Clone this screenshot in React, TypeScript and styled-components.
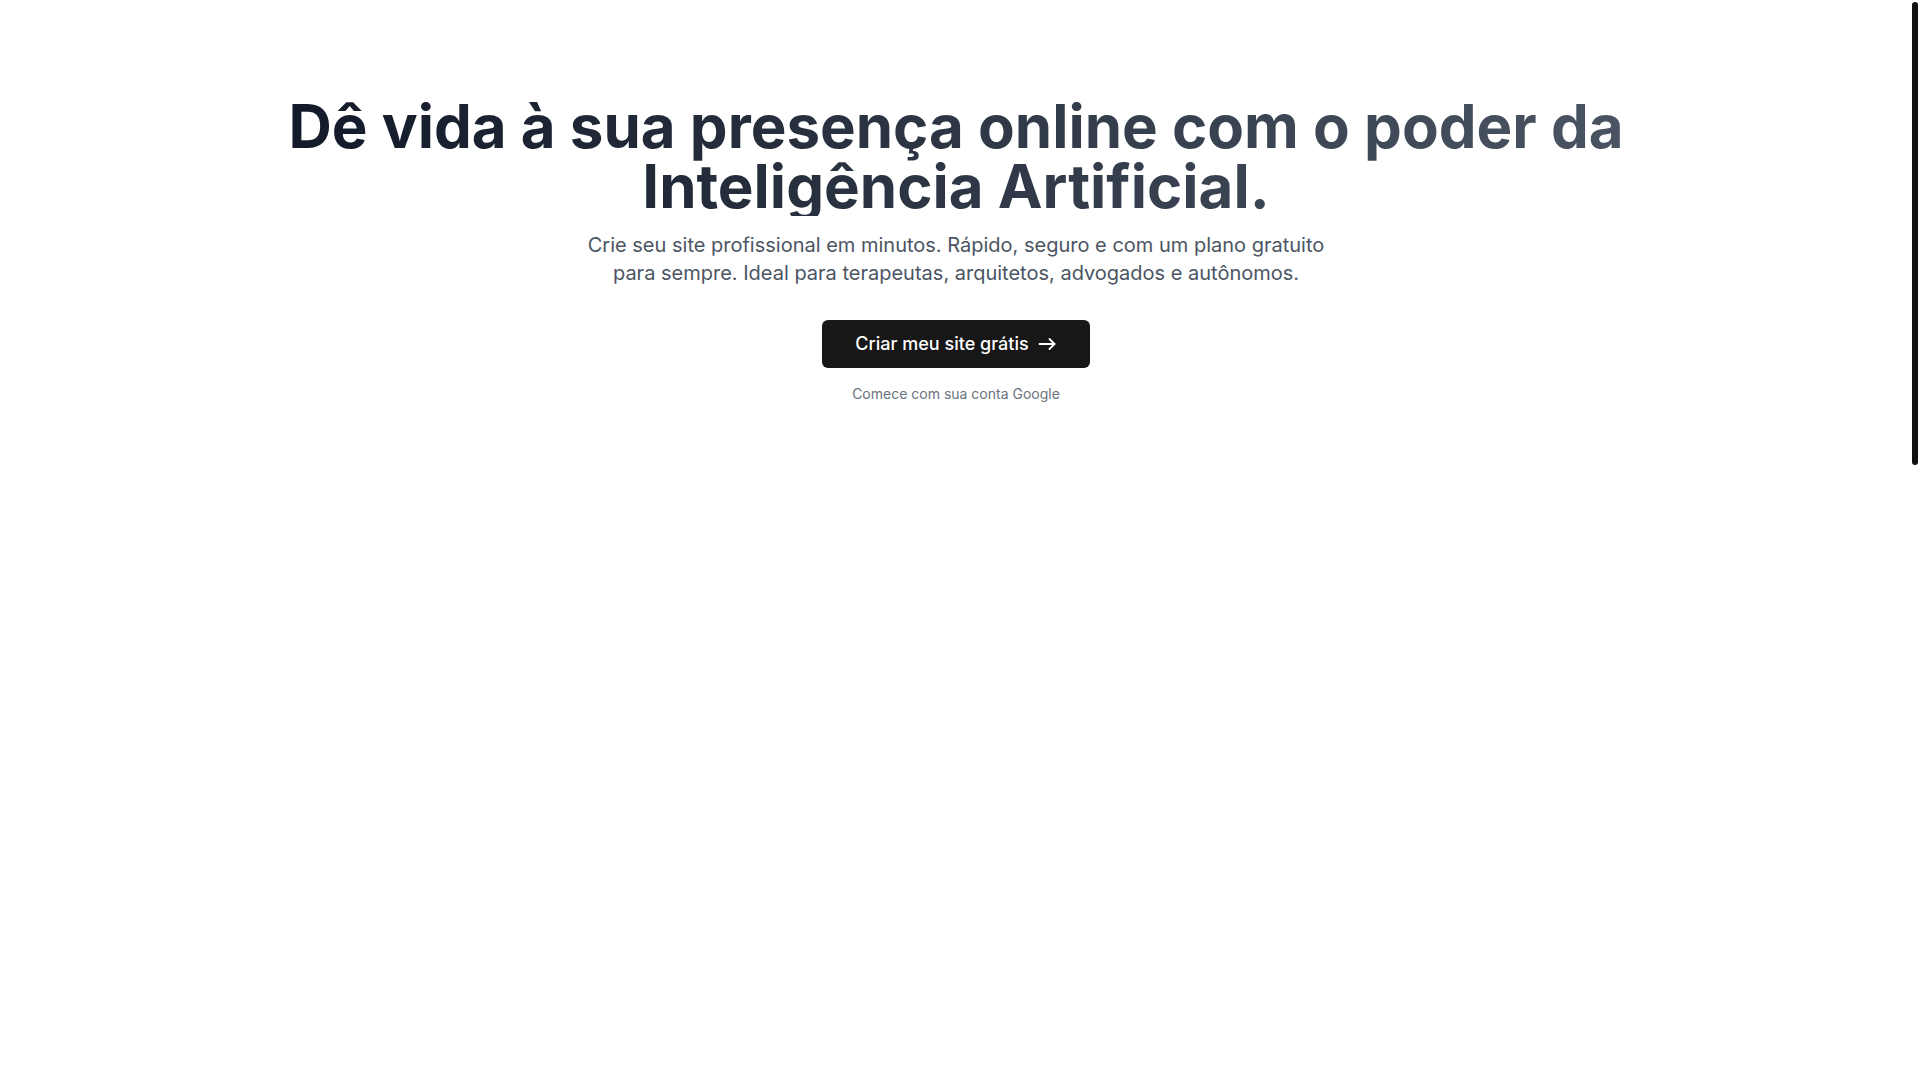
import React from "react";
import styled, { createGlobalStyle } from "styled-components";

const GlobalStyle = createGlobalStyle`
  html, body {
    margin: 0;
    padding: 0;
    height: 100%;
    overflow: hidden;
    background: #ffffff;
    font-family: Inter, "Noto Sans", "Liberation Sans", sans-serif;
    -webkit-font-smoothing: antialiased;
  }
  #root { height: 100%; }
  * { box-sizing: border-box; }
`;

const Viewport = styled.div`
  position: relative;
  height: 100vh;
  overflow-y: scroll;
  background: #ffffff;
  scrollbar-width: none;
  &::-webkit-scrollbar { display: none; }
`;

const ScrollThumb = styled.div`
  position: fixed;
  top: 2px;
  right: 2px;
  width: 6px;
  height: 463px;
  border-radius: 3px;
  background: #111111;
  pointer-events: none;
`;

const Page = styled.main`
  min-height: 2520px;
  padding-right: 8px;
`;

const Hero = styled.section`
  display: flex;
  flex-direction: column;
  align-items: center;
  padding: 96px 24px 0;
  text-align: center;
`;

const Title = styled.h1`
  margin: 0;
  max-width: 1400px;
  font-size: 60px;
  line-height: 1;
  font-weight: 700;
  letter-spacing: 0;
  background: linear-gradient(to right, #111827, #4b5563);
  -webkit-background-clip: text;
  background-clip: text;
  color: transparent;
`;

const Lead = styled.p`
  margin: 15px 0 0;
  max-width: 768px;
  font-size: 20px;
  line-height: 28px;
  font-weight: 400;
  color: #4b5563;
`;

const CtaButton = styled.button`
  margin-top: 33px;
  display: inline-flex;
  align-items: center;
  gap: 9px;
  height: 48px;
  padding: 0 34px 0 33px;
  border: none;
  border-radius: 6px;
  background: #171717;
  color: #ffffff;
  font-family: inherit;
  font-size: 18px;
  font-weight: 500;
  line-height: 28px;
  cursor: pointer;
`;

const Arrow = styled.svg`
  width: 18px;
  height: 12px;
  flex: none;
`;

const Hint = styled.p`
  margin: 16px 0 0;
  font-size: 14px;
  line-height: 20px;
  color: #6b7280;
`;

export default function App() {
  return (
    <>
      <GlobalStyle />
      <Viewport>
        <Page>
          <Hero>
            <Title>
              Dê vida à sua presença online com o poder da Inteligência Artificial.
            </Title>
            <Lead>
              Crie seu site profissional em minutos. Rápido, seguro e com um plano gratuito
              para sempre. Ideal para terapeutas, arquitetos, advogados e autônomos.
            </Lead>
            <CtaButton type="button">
              Criar meu site grátis
              <Arrow viewBox="0 0 18 12" fill="none" stroke="currentColor" strokeWidth="1.8" strokeLinecap="round" strokeLinejoin="round" aria-hidden="true">
                <path d="M1.5 6h15" />
                <path d="M11.5 1l5 5-5 5" />
              </Arrow>
            </CtaButton>
            <Hint>Comece com sua conta Google</Hint>
          </Hero>
        </Page>
      </Viewport>
      <ScrollThumb aria-hidden="true" />
    </>
  );
}
